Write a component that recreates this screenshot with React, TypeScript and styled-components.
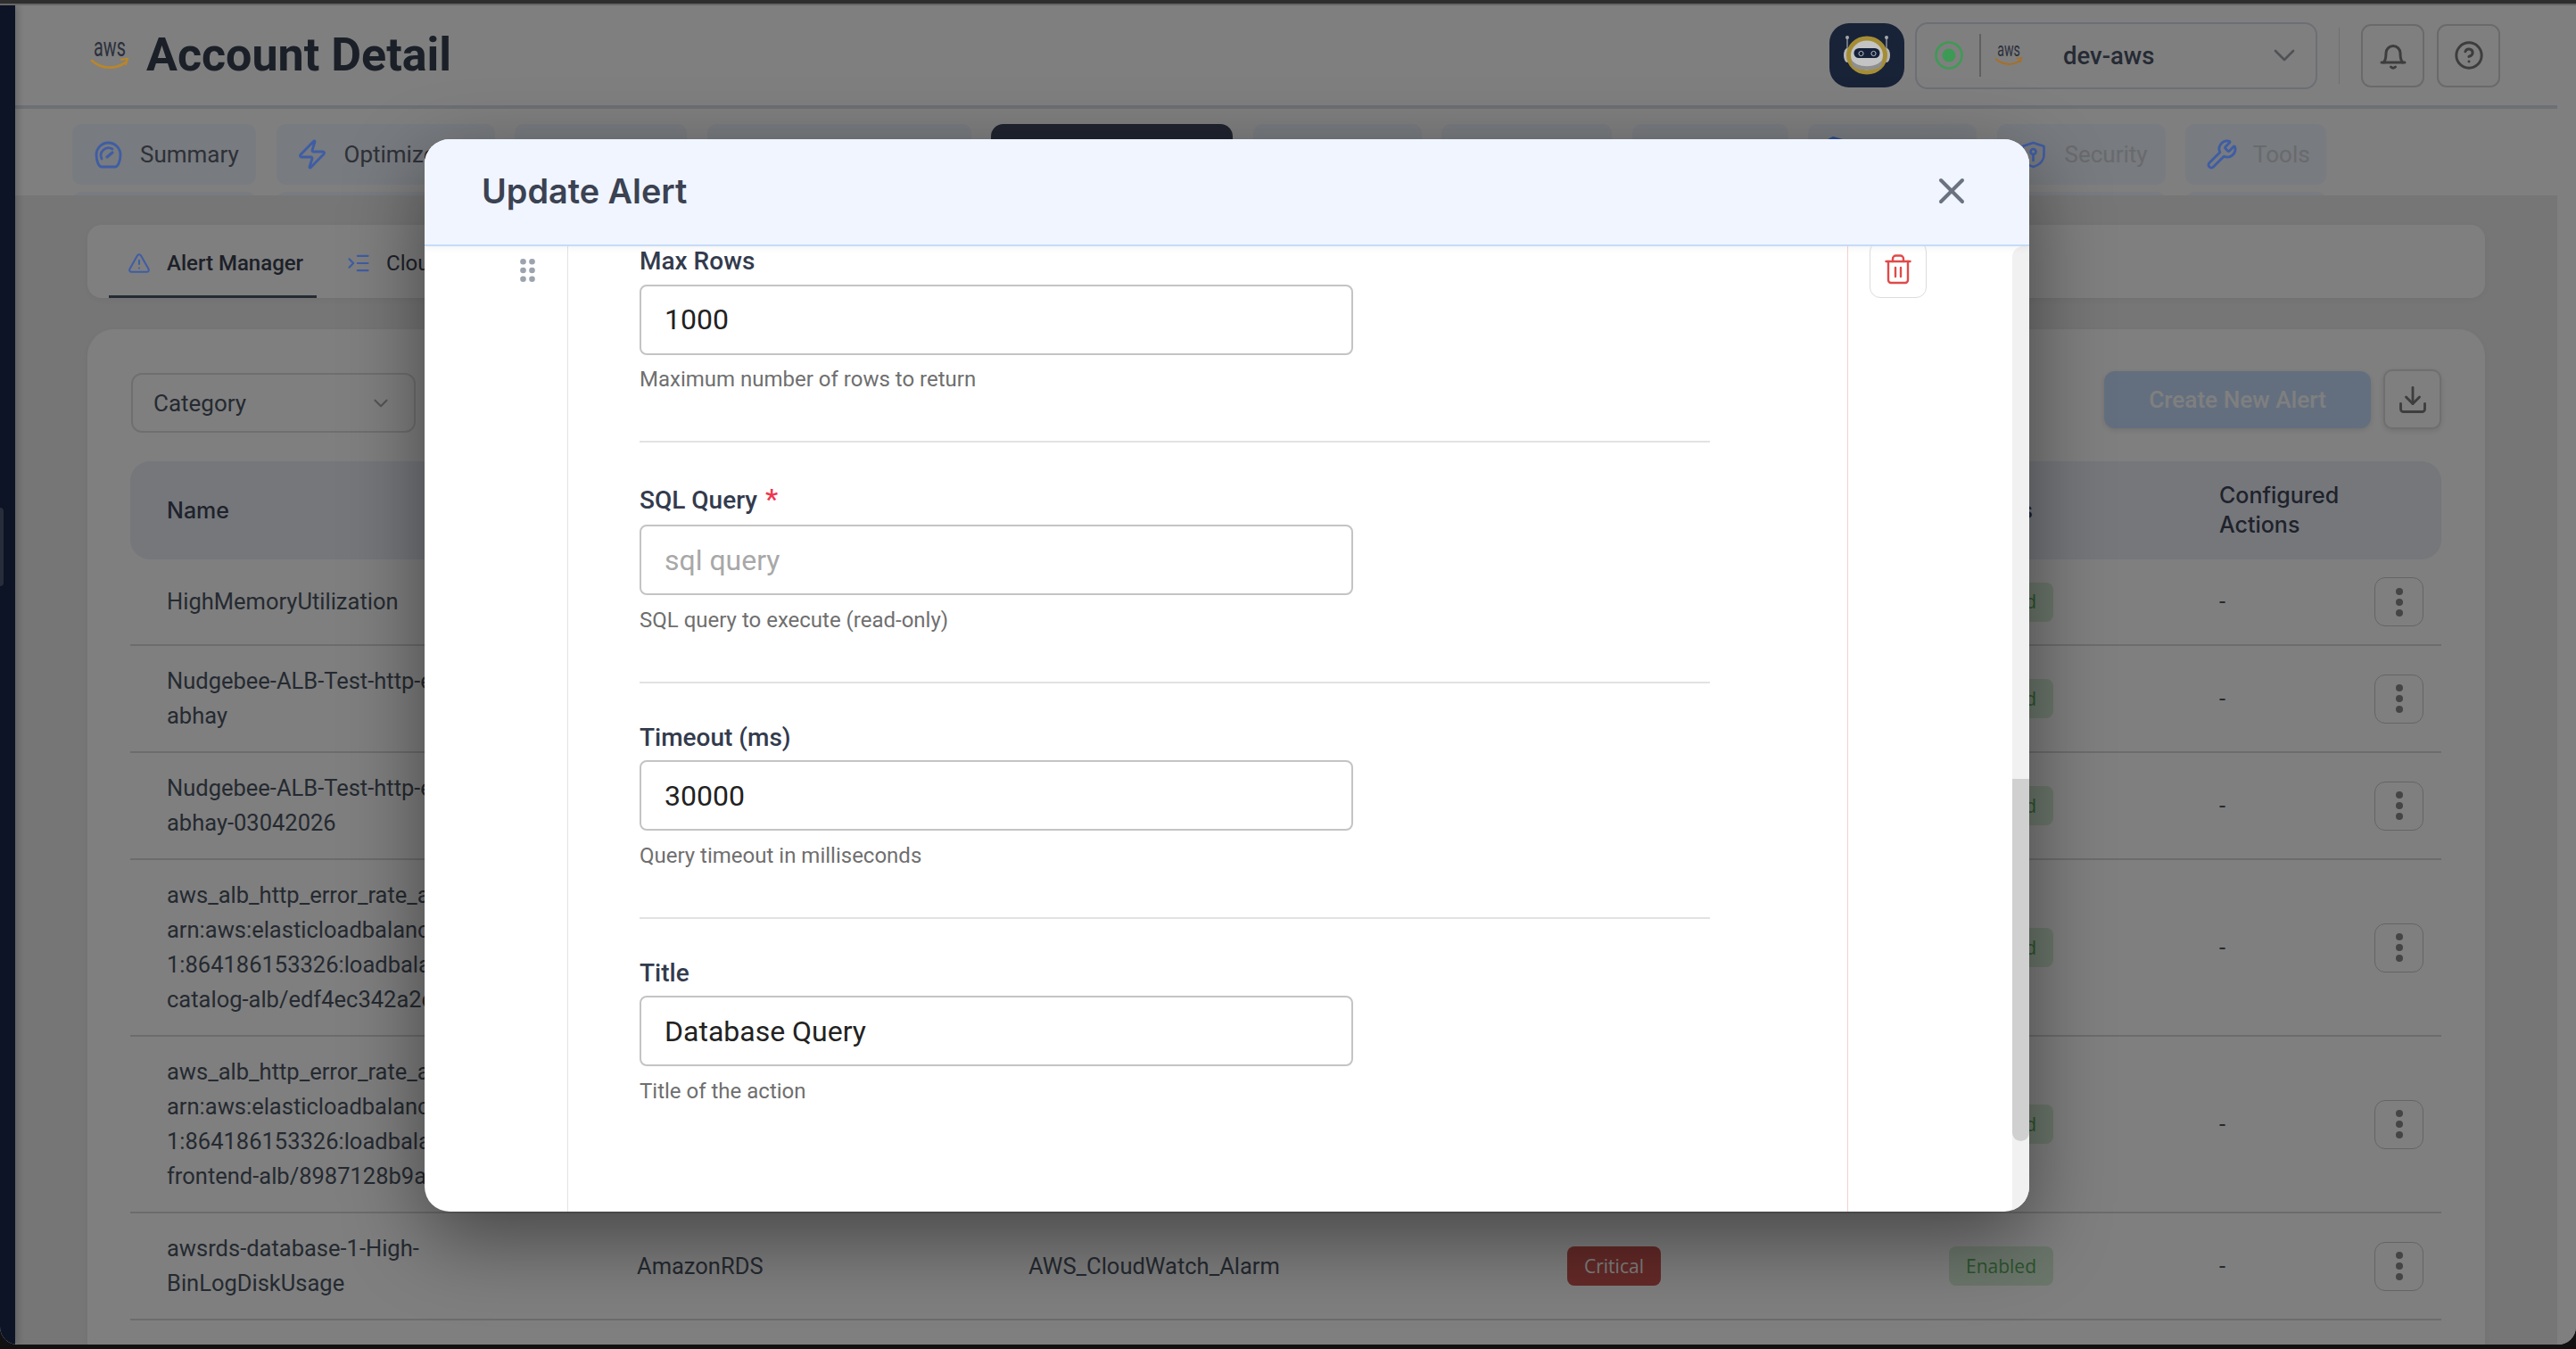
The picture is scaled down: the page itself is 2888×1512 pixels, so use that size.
import React from 'react'
import styled, { createGlobalStyle } from 'styled-components'
import {
  ChevronDown,
  CircleHelp,
  Download,
  IndentIncrease,
  TriangleAlert,
  Wrench,
  X,
  Zap,
} from 'lucide-react'

const GlobalStyle = createGlobalStyle`
  html, body { margin: 0; padding: 0; background: #111; }
  * { box-sizing: border-box; }
  body { font-family: Roboto, 'Liberation Sans', sans-serif; }
`

const Screen = styled.div`
  width: 2888px;
  height: 1512px;
  display: flex;
  flex-direction: column;
  overflow: hidden;
  background: #111;
`
const TopStrip = styled.div`
  flex: 0 0 6px;
  background: #2e2e2e;
  border-bottom: 2px solid #666;
`
const AppWindow = styled.div`
  position: relative;
  flex: 0 0 1501px;
  display: flex;
  overflow: hidden;
  border-radius: 0 0 20px 20px;
  background: #fff;
`
const Sidebar = styled.aside`
  position: relative;
  flex: 0 0 17px;
  background: #18284a;
  box-shadow: 3px 0 8px rgba(0, 0, 0, 0.2);
  z-index: 1;
`
const SidebarHandle = styled.span`
  position: absolute;
  left: 0;
  top: 563px;
  width: 4px;
  height: 88px;
  border-radius: 0 6px 6px 0;
  background: #4f5a75;
`
const Main = styled.main`
  flex: 0 0 2850px;
  display: flex;
  flex-direction: column;
  background: #ededed;
  overflow: hidden;
`
/* brand marks keep their full colour through the dimming layer */
const Lifted = styled.span`
  position: relative;
  z-index: 6;
  display: flex;
  svg { overflow: visible; }
`

/* top bar */
const Header = styled.header`
  flex: 0 0 114px;
  display: flex;
  align-items: center;
  justify-content: space-between;
  padding: 0 64px 0 85px;
  background: #fff;
  border-bottom: 2px solid #d7dff0;
`
const TitleGroup = styled.div`
  display: flex;
  align-items: center;
  gap: 20px;
`
const PageTitle = styled.h1`
  margin: 0;
  font-size: 52px;
  line-height: 60px;
  font-weight: 700;
  color: #374151;
`
const HeaderActions = styled.div`
  display: flex;
  align-items: center;
`
const RobotTile = styled(Lifted)`
  width: 84px;
  height: 72px;
  border-radius: 22px;
  background: #182338;
  margin-right: 12px;
`
const AccountSelect = styled.div`
  width: 451px;
  height: 75px;
  display: flex;
  align-items: center;
  padding-left: 20px;
  border: 2px solid #d8deea;
  border-radius: 14px;
  background: #fff;
`
const SelectRule = styled.span`
  width: 2px;
  height: 48px;
  margin: 0 16px 0 18px;
  background: #c0c0c0;
`
const AccountName = styled.span`
  margin-left: 46px;
  font-size: 27.5px;
  font-weight: 500;
  color: #4a5568;
`
const SelectChevron = styled.span`
  display: flex;
  margin-left: auto;
  margin-right: 15px;
  color: #a0a4ad;
`
const HeaderRule = styled.span`
  width: 1px;
  height: 63px;
  margin: 0 24px;
  background: #dedede;
`
const IconButton = styled.button`
  width: 71px;
  height: 71px;
  display: flex;
  align-items: center;
  justify-content: center;
  margin-right: 14px;
  padding: 0;
  border: 2px solid #d4d4d4;
  border-radius: 11px;
  background: #fff;
  color: #7a7a7a;
  &:last-child { margin-right: 0; }
`

/* page tabs */
const TabsRow = styled.nav`
  flex: 0 0 99px;
  display: flex;
  gap: 22.5px;
  padding: 17px 0 0 64px;
  overflow: hidden;
  background: #fff;
  border-top: 2px solid #e0e0e0;
`
const TabColumn = styled.div<{ $w: number }>`
  flex: 0 0 ${p => p.$w}px;
  display: flex;
  flex-direction: column;
  gap: 8px;
`
const Tab = styled.div<{ $active?: boolean; $faded?: boolean }>`
  height: 68px;
  flex: 0 0 68px;
  display: flex;
  align-items: center;
  gap: 20px;
  padding-left: 25px;
  border-radius: ${p => (p.$active ? '14px' : '10px')};
  background: ${p => (p.$active ? '#40495f' : '#f0f6ff')};
  color: ${p => (p.$faded ? '#d2d5da' : '#5c6270')};
  font-size: 26px;
`
const TabGlyph = styled(Lifted)`
  flex: 0 0 31px;
  width: 31px;
  min-width: 0;
  justify-content: center;
  color: #3f5da5;
  svg { flex-shrink: 0; }
`
const TabPeek = styled(Lifted)`
  align-self: flex-start;
  margin: 14px 0 0 -5px;
  color: #2f4b8f;
`
const TabTail = styled.div`
  flex: 0 0 12px;
  border-radius: 10px 10px 0 0;
  background: #f0f6ff;
`

/* content */
const Content = styled.section`
  flex: 1;
  display: flex;
  flex-direction: column;
  gap: 35px;
  padding: 33px 81px 0;
  min-height: 0;
`
const Card = styled.div`
  background: #fff;
  box-shadow: 0 2px 10px rgba(0, 0, 0, 0.05);
`
const SubTabs = styled(Card)`
  flex: 0 0 82px;
  display: flex;
  gap: 13px;
  padding-left: 24px;
  border-radius: 16px;
`
const SubTab = styled.div<{ $active?: boolean }>`
  display: flex;
  align-items: center;
  gap: 20px;
  padding: 6px 15px 0 23px;
  font-size: 24px;
  font-weight: ${p => (p.$active ? 500 : 400)};
  color: #3a4150;
  border-bottom: 3px solid ${p => (p.$active ? '#4a5468' : 'transparent')};
`
const SubGlyph = styled(Lifted)`
  flex: 0 0 22px;
  width: 22px;
  min-width: 0;
  justify-content: center;
  color: #3f5da5;
  svg { flex-shrink: 0; }
`
const TableCard = styled(Card)`
  flex: 1;
  min-height: 0;
  padding: 45px 49px 0 48px;
  border-radius: 30px 30px 0 0;
`
const Toolbar = styled.div`
  display: flex;
  align-items: flex-start;
  height: 71px;
  margin-bottom: 32px;
`
const CategorySelect = styled.div`
  width: 319px;
  height: 67px;
  margin: 4px 0 0 1px;
  display: flex;
  align-items: center;
  justify-content: space-between;
  padding: 0 24px 0 23px;
  border: 2px solid #dfdfdf;
  border-radius: 12px;
  font-size: 26px;
  color: #4b5563;
  svg { color: #aaa; }
`
const CreateButton = styled.button`
  width: 299px;
  height: 64px;
  margin: 2px 0 0 auto;
  border: 0;
  border-radius: 12px;
  background: #c6deff;
  box-shadow: 0 2px 6px rgba(0, 0, 0, 0.12);
  font: 500 26.2px Roboto, sans-serif;
  color: #fff;
`
const DownloadButton = styled.button`
  width: 65px;
  height: 67px;
  margin-left: 14px;
  display: flex;
  align-items: center;
  justify-content: center;
  padding: 0;
  border: 2px solid #dedede;
  border-radius: 10px;
  background: #fff;
  box-shadow: 0 2px 6px rgba(0, 0, 0, 0.12);
  color: #7c7c7c;
`
const gridColumns = '527px 439px 604px 428px 303px 174px 116px'
const TableHead = styled.div`
  height: 110px;
  display: grid;
  grid-template-columns: ${gridColumns};
  align-items: center;
  border-radius: 22px;
  background: #eaeef7;
  font-family: Inter, Roboto, sans-serif;
  font-size: 25px;
  font-weight: 500;
  line-height: 33px;
  color: #3e4456;
`
const HeadCell = styled.div<{ $inset?: number }>`
  padding-left: ${p => p.$inset ?? 41}px;
`
const Row = styled.div`
  display: grid;
  grid-template-columns: ${gridColumns};
  align-items: center;
  padding: 20px 0;
  border-bottom: 2px solid #d8d8d8;
  font-size: 25.5px;
  line-height: 39px;
  color: #4b5563;
`
const Cell = styled.div`
  padding-left: 41px;
  white-space: nowrap;
  overflow: hidden;
`
const NameLine = styled.span`
  display: block;
`
const Badge = styled.span<{ $tone: 'critical' | 'enabled' }>`
  display: inline-flex;
  align-items: center;
  height: 44px;
  padding: 0 19px;
  border-radius: 8px;
  font-family: 'Open Sans', sans-serif;
  font-size: 21px;
  background: ${p => (p.$tone === 'critical' ? '#ca5450' : '#d8efd9')};
  color: ${p => (p.$tone === 'critical' ? '#fff' : '#5aaa5c')};
`
const MenuButton = styled.button`
  width: 55px;
  height: 55px;
  display: flex;
  align-items: center;
  justify-content: center;
  padding: 0;
  border: 1.5px solid #c8c8c8;
  border-radius: 12px;
  background: transparent;
  color: #8a8a8a;
`

/* overlay + modal */
const Backdrop = styled.div`
  position: absolute;
  inset: 0;
  z-index: 5;
  background: rgba(0, 0, 0, 0.5);
`
const Modal = styled.div`
  position: absolute;
  z-index: 7;
  left: 476px;
  top: 150px;
  width: 1799px;
  height: 1202px;
  display: flex;
  flex-direction: column;
  border-radius: 28px;
  overflow: hidden;
  background: #fff;
  box-shadow: 0 30px 90px rgba(0, 0, 0, 0.45);
`
const ModalHeader = styled.div`
  position: relative;
  z-index: 1;
  flex: 0 0 120px;
  display: flex;
  align-items: center;
  justify-content: space-between;
  padding: 0 63px 2px 64px;
  background: #f0f5ff;
  border-bottom: 2px solid #c4dcf8;
  box-shadow: 0 2px 8px rgba(0, 0, 0, 0.05);
`
const ModalTitle = styled.h2`
  margin: 0;
  font-family: Inter, Roboto, sans-serif;
  font-size: 37.8px;
  font-weight: 600;
  color: #3b4252;
`
const CloseIcon = styled.span`
  display: flex;
  color: #6b7280;
`
const ModalBody = styled.div`
  flex: 1;
  min-height: 0;
  display: flex;
`
const DragColumn = styled.div`
  flex: 0 0 161px;
  display: flex;
  justify-content: flex-end;
  padding: 14px 36px 0 0;
  border-right: 1px solid #e3e3e3;
  color: #9ca3af;
`
const FormColumn = styled.div`
  flex: 0 0 1435px;
  padding-left: 80px;
  border-right: 1px solid #f8cfd3;
  overflow: hidden;
`
const Field = styled.div`
  width: 1200px;
  padding: 44px 0 54px;
  border-bottom: 2px solid #e2e2e2;
  &:first-child { padding-top: 0; }
  &:last-child { border-bottom: 0; }
`
const FieldLabel = styled.div<{ $required?: boolean }>`
  height: ${p => (p.$required ? 40 : 34.5)}px;
  margin-bottom: 8px;
  font-size: 28px;
  line-height: ${p => (p.$required ? 38 : 34)}px;
  font-weight: 500;
  color: #333b4d;
`
const Asterisk = styled.span`
  margin-left: 9px;
  color: #f0374f;
  font-size: 32px;
`
const TextInput = styled.div<{ $placeholder?: boolean }>`
  width: 800px;
  height: 79px;
  display: flex;
  align-items: center;
  padding-left: 26px;
  border: 2px solid #c4c4c4;
  border-radius: 8px;
  font-size: 32px;
  color: ${p => (p.$placeholder ? '#a8a8a8' : '#222')};
`
const Helper = styled.div`
  margin-top: 12.5px;
  font-size: 24px;
  line-height: 30px;
  color: #6f6f6f;
`
const ActionColumn = styled.div`
  flex: 0 0 184px;
  padding-left: 24px;
`
const TrashButton = styled.button`
  width: 64px;
  height: 64px;
  margin-top: -6px;
  display: flex;
  align-items: center;
  justify-content: center;
  padding: 0;
  border: 1px solid #dcdcdc;
  border-radius: 12px;
  background: #fff;
  color: #e04a4a;
`
const ScrollTrack = styled.div`
  flex: 0 0 19px;
  padding-top: 597px;
  background: #f1f1f1;
  border-radius: 12px 0 0 0;
`
const ScrollThumb = styled.div`
  height: 406px;
  border-radius: 0 0 10px 10px;
  background: #d0d0d0;
`

const AwsLogo = ({ w, smile }: { w: number; smile: string }) => (
  <Lifted>
    <svg width={w} height={w * 0.83} viewBox="0 0 42 35">
      <text x="3" y="18" fontFamily="Roboto, sans-serif" fontSize="30" textLength="36" lengthAdjust="spacingAndGlyphs" fill="#2b303c">aws</text>
      <path d="M1 23c11 10 27 10 38 2" fill="none" stroke={smile} strokeWidth="2.8" strokeLinecap="round" />
      <path d="M33 22l8-1-2 7" fill="none" stroke={smile} strokeWidth="2.2" />
    </svg>
  </Lifted>
)

const RobotLogo = () => (
  <RobotTile>
    <svg width="84" height="72" viewBox="0 0 84 72">
      <path d="M20 16v20M64 16v20" stroke="#8b8f98" strokeWidth="1.500" />
      <circle cx="20" cy="16" r="2" fill="#a8a8a8" />
      <circle cx="64" cy="16" r="2" fill="#a8a8a8" />
      <ellipse cx="20" cy="36" rx="4" ry="8" fill="#b5b5b5" />
      <ellipse cx="64" cy="36" rx="4" ry="8" fill="#b5b5b5" />
      <ellipse cx="42" cy="36" rx="20.500" ry="19" fill="#c4c4c4" stroke="#a58d35" strokeWidth="5" />
      <path d="M24 40c6 11 30 11 36 0l-2 8c-6 6-26 6-32 0z" fill="#8f8f8f" />
      <rect x="27.500" y="28" width="29" height="11" rx="5.500" fill="#14203a" />
      <circle cx="35.500" cy="34" r="2.600" fill="none" stroke="#bbb" strokeWidth="1" />
      <circle cx="49.500" cy="34" r="2.600" fill="none" stroke="#bbb" strokeWidth="1" />
    </svg>
  </RobotTile>
)

const StatusDot = () => (
  <Lifted>
    <svg width="32" height="32" viewBox="0 0 32 32">
      <circle cx="16" cy="16" r="14.500" fill="none" stroke="#3f9a55" strokeWidth="2.600" />
      <circle cx="16" cy="16" r="7.500" fill="#3d9a54" />
    </svg>
  </Lifted>
)

const GaugeIcon = () => (
  <svg width="31" height="31" viewBox="0 0 31 31" fill="none" stroke="currentColor" strokeWidth="2.800" strokeLinecap="round">
    <path d="M8 29h15c3 0 6-6 6-13.500A13.500 13.500 0 0 0 2 15.500C2 23 5 29 8 29z" />
    <path d="M8 20a8.500 8.500 0 0 1 12-11" />
    <path d="M14 18l6-5" strokeWidth="3.200" />
  </svg>
)

const ShieldKeyIcon = () => (
  <svg width="31" height="31" viewBox="0 0 31 31" fill="none" stroke="currentColor" strokeWidth="2.600" strokeLinecap="round" strokeLinejoin="round">
    <path d="M15.500 2l12 4v9c0 7-5 12-12 14-7-2-12-7-12-14V6z" />
    <circle cx="15.500" cy="12" r="3" />
    <path d="M15.500 15v7" />
  </svg>
)

const BellIcon = () => (
  <svg width="30" height="32" viewBox="0 0 30 32" fill="none" stroke="currentColor" strokeWidth="3" strokeLinecap="round" strokeLinejoin="round">
    <path d="M2 24h26" />
    <path d="M4.500 24c2-2.500 2.500-6 2.500-10.500a8 8 0 0 1 16 0c0 4.500.5 8 2.500 10.500" />
    <path d="M12.500 29c1 1.500 4 1.500 5 0" />
  </svg>
)

const TrashIcon = () => (
  <svg width="30" height="34" viewBox="0 0 30 34" fill="none" stroke="currentColor" strokeWidth="2.400" strokeLinecap="round">
    <path d="M1.500 8h27" />
    <path d="M9 8V5a3.500 3.500 0 0 1 3.500-3.500h5A3.500 3.500 0 0 1 21 5v3" />
    <path d="M4 8v21a3 3 0 0 0 3 3h16a3 3 0 0 0 3-3V8" />
    <path d="M12 15v10M18 15v10" />
  </svg>
)

const GripIcon = () => (
  <svg width="17" height="26" viewBox="0 0 17 26" fill="currentColor">
    <circle cx="3.500" cy="3.300" r="3.300" />
    <circle cx="13.500" cy="3.300" r="3.300" />
    <circle cx="3.500" cy="13" r="3.300" />
    <circle cx="13.500" cy="13" r="3.300" />
    <circle cx="3.500" cy="22.700" r="3.300" />
    <circle cx="13.500" cy="22.700" r="3.300" />
  </svg>
)

const tabs = [
  { w: 206, label: 'Summary', icon: <GaugeIcon /> },
  { w: 245, label: 'Optimize', icon: <Zap size={36} strokeWidth={1.9} /> },
  { w: 193 },
  { w: 296 },
  { w: 271, active: true },
  { w: 189 },
  { w: 191 },
  { w: 175 },
  { w: 189, peek: true },
  { w: 189, label: 'Security', icon: <ShieldKeyIcon />, faded: true },
  { w: 158, label: 'Tools', icon: <Wrench size={36} strokeWidth={1.9} />, faded: true },
]

const rows = [
  { name: ['HighMemoryUtilization'] },
  { name: ['Nudgebee-ALB-Test-http-errors-', 'abhay'] },
  { name: ['Nudgebee-ALB-Test-http-errors-', 'abhay-03042026'] },
  { name: ['aws_alb_http_error_rate_alarm-', 'arn:aws:elasticloadbalancing:us-east-', '1:864186153326:loadbalancer/app/', 'catalog-alb/edf4ec342a2e'] },
  { name: ['aws_alb_http_error_rate_alarm-', 'arn:aws:elasticloadbalancing:us-east-', '1:864186153326:loadbalancer/app/', 'frontend-alb/8987128b9a'] },
  { name: ['awsrds-database-1-High-', 'BinLogDiskUsage'] },
]

const fields = [
  { label: 'Max Rows', value: '1000', help: 'Maximum number of rows to return' },
  { label: 'SQL Query', required: true, placeholder: 'sql query', help: 'SQL query to execute (read-only)' },
  { label: 'Timeout (ms)', value: '30000', help: 'Query timeout in milliseconds' },
  { label: 'Title', value: 'Database Query', help: 'Title of the action' },
]

export default function App() {
  return (
    <Screen>
      <GlobalStyle />
      <TopStrip />
      <AppWindow>
        <Sidebar>
          <SidebarHandle />
        </Sidebar>
        <Main>
          <Header>
            <TitleGroup>
              <AwsLogo w={42} smile="#b8862c" />
              <PageTitle>Account Detail</PageTitle>
            </TitleGroup>
            <HeaderActions>
              <RobotLogo />
              <AccountSelect>
                <StatusDot />
                <SelectRule />
                <AwsLogo w={30} smile="#a86f25" />
                <AccountName>dev-aws</AccountName>
                <SelectChevron>
                  <ChevronDown size={40} strokeWidth={1.6} />
                </SelectChevron>
              </AccountSelect>
              <HeaderRule />
              <IconButton>
                <BellIcon />
              </IconButton>
              <IconButton>
                <CircleHelp size={34} strokeWidth={2.1} />
              </IconButton>
            </HeaderActions>
          </Header>
          <TabsRow>
            {tabs.map((t, i) => (
              <TabColumn key={i} $w={t.w}>
                <Tab $active={t.active} $faded={t.faded}>
                  {t.icon && <TabGlyph>{t.icon}</TabGlyph>}
                  {t.peek && (
                    <TabPeek>
                      <svg width="19" height="12" viewBox="0 0 19 12" fill="currentColor">
                        <path d="M0 4l8-4 11 3v9H0z" />
                      </svg>
                    </TabPeek>
                  )}
                  {t.label}
                </Tab>
                <TabTail />
              </TabColumn>
            ))}
          </TabsRow>
          <Content>
            <SubTabs>
              <SubTab $active>
                <SubGlyph>
                  <TriangleAlert size={26} strokeWidth={1.9} />
                </SubGlyph>
                Alert Manager
              </SubTab>
              <SubTab>
                <SubGlyph>
                  <IndentIncrease size={28} strokeWidth={1.9} />
                </SubGlyph>
                Cloud Alerts
              </SubTab>
            </SubTabs>
            <TableCard>
              <Toolbar>
                <CategorySelect>
                  Category
                  <ChevronDown size={26} strokeWidth={2} />
                </CategorySelect>
                <CreateButton>Create New Alert</CreateButton>
                <DownloadButton>
                  <Download size={36} strokeWidth={1.9} />
                </DownloadButton>
              </Toolbar>
              <TableHead>
                <HeadCell>Name</HeadCell>
                <HeadCell>Namespace</HeadCell>
                <HeadCell>Type</HeadCell>
                <HeadCell>Severity</HeadCell>
                <HeadCell $inset={59}>Status</HeadCell>
                <HeadCell>
                  Configured
                  <br />
                  Actions
                </HeadCell>
                <HeadCell />
              </TableHead>
              {rows.map((r, i) => (
                <Row key={i}>
                  <Cell>
                    {r.name.map(line => (
                      <NameLine key={line}>{line}</NameLine>
                    ))}
                  </Cell>
                  <Cell>AmazonRDS</Cell>
                  <Cell>AWS_CloudWatch_Alarm</Cell>
                  <Cell>
                    <Badge $tone="critical">Critical</Badge>
                  </Cell>
                  <Cell>
                    <Badge $tone="enabled">Enabled</Badge>
                  </Cell>
                  <Cell>-</Cell>
                  <Cell>
                    <MenuButton>
                      <svg width="8" height="34" viewBox="0 0 8 34" fill="currentColor">
                        <circle cx="4" cy="5" r="4" />
                        <circle cx="4" cy="17" r="4" />
                        <circle cx="4" cy="29" r="4" />
                      </svg>
                    </MenuButton>
                  </Cell>
                </Row>
              ))}
            </TableCard>
          </Content>
        </Main>
        <Backdrop />
        <Modal>
          <ModalHeader>
            <ModalTitle>Update Alert</ModalTitle>
            <CloseIcon>
              <X size={48} strokeWidth={2} />
            </CloseIcon>
          </ModalHeader>
          <ModalBody>
            <DragColumn>
              <GripIcon />
            </DragColumn>
            <FormColumn>
              {fields.map(f => (
                <Field key={f.label}>
                  <FieldLabel $required={f.required}>
                    {f.label}
                    {f.required && <Asterisk>*</Asterisk>}
                  </FieldLabel>
                  <TextInput $placeholder={!f.value}>{f.value ?? f.placeholder}</TextInput>
                  <Helper>{f.help}</Helper>
                </Field>
              ))}
            </FormColumn>
            <ActionColumn>
              <TrashButton>
                <TrashIcon />
              </TrashButton>
            </ActionColumn>
            <ScrollTrack>
              <ScrollThumb />
            </ScrollTrack>
          </ModalBody>
        </Modal>
      </AppWindow>
    </Screen>
  )
}
